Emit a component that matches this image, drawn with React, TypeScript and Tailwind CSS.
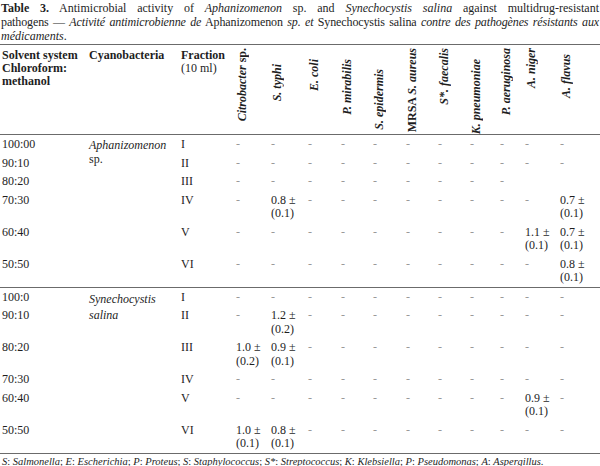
import React from 'react';

type V = string | null | [string, string];
const D = '-';
const all = (): V[] => Array.from({ length: 11 }, () => D);

const upper: [string, string, V[]][] = [
  ['100:00', 'I', all()],
  ['90:10', 'II', all()],
  ['80:20', 'III', [D, D, D, D, D, D, D, D, D, null, null]],
  ['70:30', 'IV', [D, ['0.8 ±', '(0.1)'], D, D, D, D, D, D, D, D, ['0.7 ±', '(0.1)']]],
  ['60:40', 'V', [D, D, D, D, D, D, D, D, D, ['1.1 ±', '(0.1)'], ['0.7 ±', '(0.1)']]],
  ['50:50', 'VI', [D, D, D, D, D, D, D, D, D, D, ['0.8 ±', '(0.1)']]],
];

const lower: [string, string, V[]][] = [
  ['100:0', 'I', all()],
  ['90:10', 'II', [D, ['1.2 ±', '(0.2)'], D, D, D, D, D, D, D, D, D]],
  ['80:20', 'III', [['1.0 ±', '(0.2)'], ['0.9 ±', '(0.1)'], D, D, D, D, D, D, D, D, D]],
  ['70:30', 'IV', all()],
  ['60:40', 'V', [D, D, D, D, D, D, D, D, D, ['0.9 ±', '(0.1)'], D]],
  ['50:50', 'VI', [['1.0 ±', '(0.1)'], ['0.8 ±', '(0.1)'], D, D, D, D, D, D, D, D, D]],
];

const heads: { label: React.ReactNode; mt: string }[] = [
  { label: <><i>Citrobacter</i> sp.</>, mt: 'mt-[3px]' },
  { label: <i>S. typhi</i>, mt: 'mt-[19px]' },
  { label: <i>E. coli</i>, mt: 'mt-[14px]' },
  { label: <i>P. mirabilis</i>, mt: 'mt-[14px]' },
  { label: <i>S. epidermis</i>, mt: 'mt-[24px]' },
  { label: <>MRSA <i>S. aureus</i></>, mt: 'mt-[3px]' },
  { label: <i>S*. faecalis</i>, mt: 'mt-[3px]' },
  { label: <i>K. pneumoniae</i>, mt: 'mt-[14px]' },
  { label: <i>P. aeruginosa</i>, mt: 'mt-[3px]' },
  { label: <i>A. niger</i>, mt: 'mt-[3px]' },
  { label: <i>A. flavus</i>, mt: 'mt-[9px]' },
];

const widths = [89, 92, 55, 35, 37, 33, 32, 33, 32, 32, 30, 25, 35, 40];

const cell = 'align-top p-0 pt-[3px] pb-[2px] leading-[13.5px] text-left font-normal';

function Val({ v }: { v: V }) {
  if (v === null) return null;
  if (typeof v === 'string') return <span className="text-[#999999]">{v}</span>;
  return (
    <>
      <span className="block whitespace-nowrap">{v[0]}</span>
      <span className="block whitespace-nowrap">{v[1]}</span>
    </>
  );
}

function Section({
  rows,
  name,
  nameCls,
  last,
}: {
  rows: [string, string, V[]][];
  name: React.ReactNode;
  nameCls: string;
  last?: boolean;
}) {
  return (
    <>
      {rows.map((r, i) => (
        <tr
          key={i}
          className={
            (i === 0 ? 'border-t border-[#6b6b6b] ' : '') +
            (last && i === rows.length - 1 ? 'border-b border-[#6b6b6b]' : '')
          }
        >
          <td className={cell + ' pl-[2px]'}>{r[0]}</td>
          {i === 0 && (
            <td rowSpan={rows.length} className={'align-top p-0 pt-[3px] italic ' + nameCls}>
              {name}
            </td>
          )}
          <td className={cell}>{r[1]}</td>
          {r[2].map((v, j) => (
            <td key={j} className={cell}>
              <Val v={v} />
            </td>
          ))}
        </tr>
      ))}
    </>
  );
}

export default function App() {
  return (
    <div className="w-[600px] h-[466px] bg-white text-[#1e1e1e] [font-family:'Liberation_Serif','Times_New_Roman',serif] text-[12px] overflow-hidden pt-[1px]">
      <div className="leading-[14px] px-[1px]">
        <div className="text-justify [text-align-last:justify] whitespace-nowrap">
          <b>Table 3.</b> Antimicrobial activity of <i>Aphanizomenon</i> sp. and <i>Synechocystis salina</i> against multidrug-resistant
        </div>
        <div className="text-justify [text-align-last:justify] whitespace-nowrap tracking-[-0.12px]">
          pathogens — <i>Activité antimicrobienne de</i> Aphanizomenon <i>sp. et</i> Synechocystis salina <i>contre des pathogènes résistants aux</i>
        </div>
        <div>
          <i>médicaments</i>.
        </div>
      </div>
      <table className="table-fixed border-collapse w-[600px] mt-[1px]">
        <colgroup>
          {widths.map((w, i) => (
            <col key={i} style={{ width: w }} />
          ))}
        </colgroup>
        <thead>
          <tr className="border-t border-b border-[#6b6b6b]">
            <th className="align-top h-[89px] p-0 pt-[3.5px] pl-[2px] text-left font-bold leading-[13px]">
              Solvent system
              <br />
              Chloroform:
              <br />
              methanol
            </th>
            <th className="align-top p-0 pt-[3.5px] text-left font-bold leading-[13px]">Cyanobacteria</th>
            <th className="align-top p-0 pt-[3.5px] text-left leading-[13px]">
              <span className="font-bold">Fraction</span>
              <br />
              <span className="font-normal">(10 ml)</span>
            </th>
            {heads.map((h, i) => (
              <th key={i} className="align-top p-0 text-left font-bold">
                <div className={'[writing-mode:vertical-rl] rotate-180 leading-[13px] whitespace-nowrap ' + h.mt}>
                  {h.label}
                </div>
              </th>
            ))}
          </tr>
        </thead>
        <tbody>
          <Section
            rows={upper}
            nameCls="leading-[14px]"
            name={
              <>
                Aphanizomenon
                <br />
                <span className="not-italic">sp.</span>
              </>
            }
          />
          <Section
            rows={lower}
            nameCls="leading-[16px]"
            last
            name={
              <>
                Synechocystis
                <br />
                salina
              </>
            }
          />
        </tbody>
      </table>
      <div className="leading-[14px] mt-[1px] pl-[2px] text-[10.5px] whitespace-nowrap">
        <i>S</i>: <i>Salmonella</i>; <i>E</i>: <i>Escherichia</i>; <i>P</i>: <i>Proteus</i>; <i>S</i>:{' '}
        <i>Staphylococcus</i>; <i>S*</i>: <i>Streptococcus</i>; <i>K</i>: <i>Klebsiella</i>; <i>P</i>:{' '}
        <i>Pseudomonas</i>; <i>A</i>: <i>Aspergillus</i>.
      </div>
    </div>
  );
}
